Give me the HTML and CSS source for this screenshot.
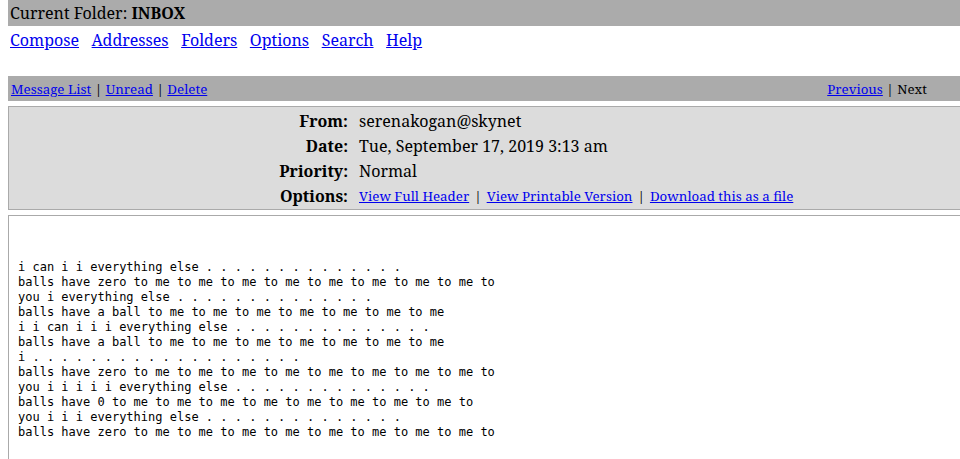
FILE: index.html
```html
<!DOCTYPE html>
<html>
<head>
<meta charset="utf-8">
<title>INBOX</title>
<link rel="stylesheet" href="styles.css">
</head>
<body>
<div class="page">
  <div class="topbar">Current Folder: <b>INBOX</b></div>
  <div class="nav">
    <a href="#">Compose</a>
    <a href="#">Addresses</a>
    <a href="#">Folders</a>
    <a href="#">Options</a>
    <a href="#">Search</a>
    <a href="#">Help</a>
  </div>
  <div class="toolbar">
    <div class="tool-left"><a href="#">Message List</a><span class="sep">|</span><a href="#">Unread</a><span class="sep">|</span><a href="#">Delete</a></div>
    <div class="tool-right"><a href="#">Previous</a><span class="sep">|</span>Next</div>
  </div>
  <div class="headers">
    <div class="label">From:</div><div class="value">serenakogan@skynet</div>
    <div class="label">Date:</div><div class="value">Tue, September 17, 2019 3:13 am</div>
    <div class="label">Priority:</div><div class="value">Normal</div>
    <div class="label">Options:</div><div class="value small"><a href="#">View Full Header</a><span class="osep">|</span><a href="#">View Printable Version</a><span class="osep">|</span><a href="#">Download this as a file</a></div>
  </div>
  <div class="body">
<pre class="msg">i can i i everything else . . . . . . . . . . . . . .
balls have zero to me to me to me to me to me to me to me to me to
you i everything else . . . . . . . . . . . . . .
balls have a ball to me to me to me to me to me to me to me
i i can i i i everything else . . . . . . . . . . . . . .
balls have a ball to me to me to me to me to me to me to me
i . . . . . . . . . . . . . . . . . . .
balls have zero to me to me to me to me to me to me to me to me to
you i i i i i everything else . . . . . . . . . . . . . .
balls have 0 to me to me to me to me to me to me to me to me to
you i i i everything else . . . . . . . . . . . . . .
balls have zero to me to me to me to me to me to me to me to me to</pre>
  </div>
</div>
</body>
</html>
```
FILE: styles.css
```css
html, body {
  overflow: hidden;
}
body {
  margin: 0 0 0 8px;
  font-family: "Noto Serif", "Droid Serif", serif;
  font-size: 16px;
  color: #000;
  background: #fff;
}
a {
  color: #0000ee;
}
.page {
  width: 980px;
}
.topbar {
  background: #ababab;
  height: 26px;
  line-height: 26px;
  padding-left: 2px;
}
.nav {
  display: flex;
  gap: 12.6px;
  padding: 3px 2px 0;
  height: 47px;
  line-height: 23px;
}
.toolbar {
  background: #ababab;
  height: 25px;
  display: flex;
  justify-content: space-between;
  align-items: center;
  font-size: 13.333px;
  padding: 0 3px;
  margin-right: 20px;
}
.tool-right {
  padding-right: 38px;
}
.sep {
  color: #000;
  padding: 0 3.5px;
}
.headers {
  margin-top: 5px;
  background: #dcdcdc;
  border: 1px solid #aaa;
  padding: 1px 0;
  display: grid;
  grid-template-columns: 339px 1fr;
  column-gap: 11px;
  grid-auto-rows: 25px;
  align-items: center;
}
.label {
  font-weight: bold;
  text-align: right;
}
.small {
  font-size: 13.333px;
}
.osep {
  color: #000;
  padding: 0 5px;
}
.body {
  margin-top: 5px;
  border: 1px solid #aaa;
  height: 300px;
  padding: 44px 9px 0;
}
.msg {
  margin: 0;
  font-family: "DejaVu Sans Mono", monospace;
  font-size: 12px;
  line-height: 15px;
}
```
